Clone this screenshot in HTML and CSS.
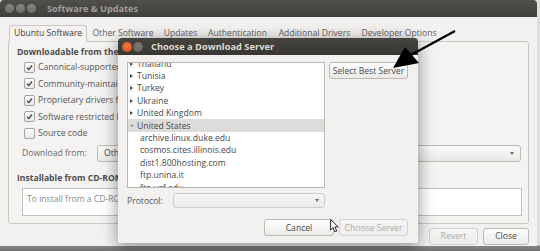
FILE: index.html
```html
<!DOCTYPE html>
<html lang="en">
<head>
    <meta charset="UTF-8">
    <title>Software &amp; Updates</title>
    <link rel="stylesheet" href="styles.css">
</head>
<body>
<div class="screen">
    <!-- MAIN WINDOW -->
    <div class="window">
        <div class="titlebar">
            <span class="win-btn"></span>
            <span class="win-btn"></span>
            <span class="win-btn"></span>
            <span class="title">Software &amp; Updates</span>
        </div>
        <div class="window-body">
            <div class="tabs">
                <span class="tab active tab-ubuntu">Ubuntu Software</span>
                <span class="tab tab-other">Other Software</span>
                <span class="tab tab-updates">Updates</span>
                <span class="tab tab-auth">Authentication</span>
                <span class="tab tab-drivers">Additional Drivers</span>
                <span class="tab tab-dev">Developer Options</span>
            </div>
            <div class="notebook">
                <div class="section-title">Downloadable from the Internet</div>
                <ul class="checks">
                    <li class="check-row"><span class="checkbox checked"><svg viewBox="0 0 10 10"><path d="M2.2 5.2 L4.2 7.2 L7.8 2.8"/></svg></span>Canonical-supported free and open-source software (main)</li>
                    <li class="check-row"><span class="checkbox checked"><svg viewBox="0 0 10 10"><path d="M2.2 5.2 L4.2 7.2 L7.8 2.8"/></svg></span>Community-maintained free and open-source software (universe)</li>
                    <li class="check-row"><span class="checkbox checked"><svg viewBox="0 0 10 10"><path d="M2.2 5.2 L4.2 7.2 L7.8 2.8"/></svg></span>Proprietary drivers for devices (restricted)</li>
                    <li class="check-row"><span class="checkbox checked"><svg viewBox="0 0 10 10"><path d="M2.2 5.2 L4.2 7.2 L7.8 2.8"/></svg></span>Software restricted by copyright or legal issues (multiverse)</li>
                    <li class="check-row"><span class="checkbox"></span>Source code</li>
                </ul>
                <div class="download-row">
                    <span class="field-label">Download from:</span>
                    <div class="combo download-combo"><span>Other...</span><span class="combo-arrow"></span></div>
                </div>
                <div class="section-title cdrom-title">Installable from CD-ROM/DVD</div>
                <div class="cdrom-box">To install from a CD-ROM or DVD, insert the medium into the drive.</div>
            </div>
            <div class="actions">
                <span class="button disabled revert">Revert</span>
                <span class="button close">Close</span>
            </div>
        </div>
    </div>

    <!-- DIALOG -->
    <div class="dialog">
        <div class="dialog-titlebar">
            <span class="dlg-close"></span>
            <span class="dlg-min"></span>
            <span class="dialog-title">Choose a Download Server</span>
        </div>
        <div class="dialog-body">
            <div class="server-row">
                <div class="tree">
                    <ul class="tree-items">
                        <li class="tree-item"><span class="expander"></span>Thailand</li>
                        <li class="tree-item"><span class="expander"></span>Tunisia</li>
                        <li class="tree-item"><span class="expander"></span>Turkey</li>
                        <li class="tree-item"><span class="expander"></span>Ukraine</li>
                        <li class="tree-item"><span class="expander"></span>United Kingdom</li>
                        <li class="tree-item selected"><span class="expander open"></span>United States</li>
                        <li class="tree-item child">archive.linux.duke.edu</li>
                        <li class="tree-item child">cosmos.cites.illinois.edu</li>
                        <li class="tree-item child">dist1.800hosting.com</li>
                        <li class="tree-item child">ftp.unina.it</li>
                        <li class="tree-item child">ftp.usf.edu</li>
                    </ul>
                </div>
                <span class="button best-server">Select Best Server</span>
            </div>
            <div class="protocol-row">
                <span class="protocol-label">Protocol:</span>
                <div class="combo protocol-combo"><span></span><span class="combo-arrow"></span></div>
            </div>
            <div class="dialog-actions">
                <span class="button cancel">Cancel</span>
                <span class="button disabled choose">Choose Server</span>
            </div>
        </div>
    </div>

    <!-- annotation arrow -->
    <svg class="annotation" viewBox="0 0 540 251">
        <line x1="455" y1="31" x2="409" y2="56" stroke="#000" stroke-width="2.2"/>
        <polygon points="393,68 405,47 419,63" fill="#000"/>
    </svg>

    <!-- mouse pointer -->
    <svg class="pointer" viewBox="0 0 9 14">
        <path d="M0.6 0.6 L0.6 11 L3.1 8.6 L5 12.8 L6.8 12 L4.9 7.9 L8.2 7.9 Z" fill="#fff" stroke="#111" stroke-width="0.9" stroke-linejoin="round"/>
    </svg>
</div>
</body>
</html>
```

FILE: styles.css
```css
html, body {
    margin: 0;
    padding: 0;
}

body {
    width: 540px;
    height: 251px;
    overflow: hidden;
    background: linear-gradient(#dedede 0, #dedede 245px, #858585 246px, #6f6f6f 251px);
    font-family: "Open Sans", "Noto Sans", sans-serif;
    font-size: 8.6px;
    color: #4a4a4a;
}

.screen {
    position: relative;
    width: 540px;
    height: 251px;
}

/* ---------- main window ---------- */

.window {
    width: 537px;
    height: 246px;
    background: #f2f1f0;
    border-radius: 4px 4px 0 0;
    display: flex;
    flex-direction: column;
}

.titlebar {
    height: 17px;
    flex-shrink: 0;
    background: linear-gradient(#504f4a, #403f3b);
    border-radius: 4px 4px 0 0;
    display: flex;
    align-items: center;
    padding-left: 5px;
    gap: 2px;
}

.win-btn {
    width: 9px;
    height: 9px;
    border-radius: 50%;
    background: linear-gradient(#85847f, #6c6b66);
}

.title {
    margin-left: 9px;
    font-weight: bold;
    font-size: 9.2px;
    color: #a09e98;
}

.window-body {
    flex: 1;
    display: flex;
    flex-direction: column;
    padding: 8px 8px 0 8px;
}

.tabs {
    display: flex;
    height: 16px;
    padding-left: 1px;
}

.tab {
    box-sizing: border-box;
    text-align: center;
    line-height: 16px;
    font-size: 8.6px;
    color: #5f5f5f;
    white-space: nowrap;
}

.tab-ubuntu { width: 78px; }
.tab-other { width: 72px; }
.tab-updates { width: 43px; }
.tab-auth { width: 71px; }
.tab-drivers { width: 83px; }
.tab-dev { width: 86px; }

.tab.active {
    color: #3c3c3c;
    background: #f4f3f2;
    border: 1px solid #cac7c2;
    border-bottom: none;
    border-radius: 3px 3px 0 0;
    line-height: 15px;
    margin-bottom: -1px;
    position: relative;
    z-index: 1;
}

.notebook {
    border: 1px solid #cac7c2;
    border-radius: 0 3px 3px 3px;
    background: #f4f3f2;
    padding: 4px 6px 7px 8px;
}

.section-title {
    font-weight: bold;
    line-height: 12px;
    color: #4e4e4e;
}

.checks {
    list-style: none;
    margin: 1px 0 0 7px;
    padding: 0;
}

.check-row {
    height: 16.5px;
    display: flex;
    align-items: center;
    gap: 3px;
    white-space: nowrap;
    color: #555;
}

.checkbox {
    width: 9px;
    height: 9px;
    border: 1px solid #a7a49f;
    border-radius: 2px;
    background: linear-gradient(#fdfdfd, #e8e7e5);
    display: flex;
}

.checkbox svg {
    width: 9px;
    height: 9px;
    fill: none;
    stroke: #4d4d4d;
    stroke-width: 1.6;
}

.download-row {
    display: flex;
    align-items: center;
    margin: 3px 0 0 5px;
}

.field-label {
    width: 75px;
    color: #6a6a6a;
}

.combo {
    display: flex;
    align-items: center;
    justify-content: space-between;
    border: 1px solid #bdbab4;
    border-radius: 3px;
    background: linear-gradient(#fafafa, #e9e8e6);
    box-sizing: border-box;
    padding: 0 6px;
}

.download-combo {
    width: 424px;
    height: 17px;
}

.combo-arrow {
    width: 0;
    height: 0;
    border-top: 3px solid #6a6a6a;
    border-left: 2.5px solid transparent;
    border-right: 2.5px solid transparent;
}

.cdrom-title {
    margin-top: 10px;
}

.cdrom-box {
    margin: 4px 0 0 5px;
    height: 28px;
    box-sizing: border-box;
    border: 1px solid #c4c1bc;
    background: #fff;
    padding: 4px 4px;
    color: #8a8a8a;
    white-space: nowrap;
    overflow: hidden;
}

.actions {
    display: flex;
    justify-content: flex-end;
    gap: 5px;
    margin-top: 4px;
}

.button {
    display: flex;
    align-items: center;
    justify-content: center;
    box-sizing: border-box;
    border: 1px solid #bcb9b3;
    border-radius: 3px;
    background: linear-gradient(#fefefe, #ebeae8);
    color: #4a4a4a;
    white-space: nowrap;
}

.button.disabled {
    color: #ababab;
    border-color: #d3d1cd;
    background: linear-gradient(#f5f5f4, #eeedec);
}

.revert {
    width: 49px;
    height: 17px;
}

.close {
    width: 46px;
    height: 17px;
}

/* ---------- dialog ---------- */

.dialog {
    position: absolute;
    left: 118px;
    top: 38px;
    width: 300px;
    height: 205px;
    background: #f2f1f0;
    border-radius: 4px 4px 0 0;
    box-shadow: 0 3px 16px rgba(0, 0, 0, 0.45);
    display: flex;
    flex-direction: column;
}

.dialog-titlebar {
    height: 17px;
    flex-shrink: 0;
    background: linear-gradient(#45443f, #383733);
    border-radius: 4px 4px 0 0;
    display: flex;
    align-items: center;
    padding-left: 4px;
    gap: 1px;
}

.dlg-close {
    width: 10px;
    height: 10px;
    border-radius: 50%;
    background: radial-gradient(circle at 50% 40%, #f27a4a, #d94814);
}

.dlg-min {
    width: 10px;
    height: 10px;
    border-radius: 50%;
    background: radial-gradient(circle at 50% 40%, #7b7a75, #5e5d59);
}

.dialog-title {
    margin-left: 7px;
    font-weight: bold;
    font-size: 9.3px;
    color: #dedad1;
}

.dialog-body {
    flex: 1;
    padding: 7px 10px 7px 9px;
    display: flex;
    flex-direction: column;
}

.server-row {
    display: flex;
    gap: 4px;
    align-items: flex-start;
}

.tree {
    width: 198px;
    height: 126px;
    box-sizing: border-box;
    border: 1px solid #bab7b2;
    background: #fff;
    overflow: hidden;
}

.tree-items {
    list-style: none;
    margin: -5.6px 0 0 0;
    padding: 0;
}

.tree-item {
    height: 12.4px;
    display: flex;
    align-items: center;
    padding-left: 2px;
    white-space: nowrap;
    color: #474747;
}

.tree-item.selected {
    background: #dedcda;
}

.tree-item.child {
    padding-left: 12px;
}

.expander {
    width: 0;
    height: 0;
    margin-right: 4px;
    border-left: 3px solid #4a4a4a;
    border-top: 2px solid transparent;
    border-bottom: 2px solid transparent;
}

.expander.open {
    margin-right: 3px;
    border-left: 2px solid transparent;
    border-right: 2px solid transparent;
    border-top: 2px solid #8a8a8a;
    border-bottom: none;
}

.best-server {
    width: 79px;
    height: 17px;
}

.protocol-row {
    display: flex;
    align-items: center;
    width: 198px;
    margin-top: 5px;
}

.protocol-label {
    width: 46px;
    color: #555;
}

.protocol-combo {
    flex: 1;
    height: 15px;
    padding-right: 5px;
    border-color: #cfcdc9;
    background: linear-gradient(#f5f5f4, #ecebe9);
}

.dialog-actions {
    display: flex;
    justify-content: flex-end;
    gap: 5px;
    margin-top: 11px;
    padding-right: 0;
}

.cancel {
    width: 70px;
    height: 17px;
}

.choose {
    width: 69px;
    height: 17px;
}

/* ---------- overlays ---------- */

.annotation {
    position: absolute;
    left: 0;
    top: 0;
    width: 540px;
    height: 251px;
    pointer-events: none;
}

.pointer {
    position: absolute;
    left: 330px;
    top: 219px;
    width: 9px;
    height: 14px;
}
```
